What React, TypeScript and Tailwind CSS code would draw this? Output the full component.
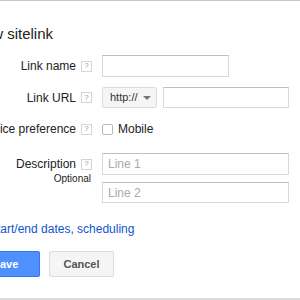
import React from "react";

function Help() {
  return (
    <div className="ml-[5px] flex h-[11px] w-[11px] shrink-0 items-center justify-center border border-[#d4d4d4] bg-white text-[8px] leading-none text-[#999]">
      ?
    </div>
  );
}

export default function App() {
  return (
    <div
      className="relative box-border h-[300px] w-[300px] overflow-hidden border-t border-b-2 border-t-[#c8c8c8] border-b-[#dcdcdc] bg-white text-[#222]"
      style={{ fontFamily: '"Liberation Sans", Arial, sans-serif' }}
    >
      <div className="ml-[-27px] mt-[24px] text-[15px] leading-[18px] text-[#222]">New sitelink</div>

      <div className="ml-[-40px] mt-[12px] flex flex-col">
        {/* Link name */}
        <div className="flex h-[22px] items-center">
          <div className="w-[116px] text-right text-[12px] leading-none">Link name</div>
          <Help />
          <div className="ml-[10px] box-border h-[22px] w-[127px] border border-[#d9d9d9] border-t-[#c0c0c0] bg-white" />
        </div>

        {/* Link URL */}
        <div className="mt-[10px] flex h-[21px] items-center">
          <div className="w-[116px] text-right text-[12px] leading-none">Link URL</div>
          <Help />
          <div className="ml-[10px] box-border flex h-[21px] w-[55px] items-center rounded-[2px] border border-[#dcdcdc] bg-[#f5f5f5] pl-[7px] text-[11px] text-[#333]">
            <span>http://</span>
            <svg className="ml-auto mr-[5px]" width="8" height="4" viewBox="0 0 8 4">
              <path d="M0 0 L8 0 L4 4 Z" fill="#777" />
            </svg>
          </div>
          <div className="ml-[6px] box-border h-[21px] w-[126px] border border-[#d9d9d9] border-t-[#c0c0c0] bg-white" />
        </div>

        {/* Device preference */}
        <div className="mt-[11px] flex h-[20px] items-center">
          <div className="w-[116px] whitespace-nowrap text-right text-[12px] leading-none">Device preference</div>
          <Help />
          <div className="ml-[10px] box-border h-[11px] w-[11px] rounded-[2px] border border-[#b8b8b8] bg-white" />
          <div className="ml-[5px] text-[12px] leading-none">Mobile</div>
        </div>

        {/* Description */}
        <div className="mt-[14px] flex">
          <div className="flex w-[132px] flex-col items-end">
            <div className="flex h-[22px] items-center">
              <div className="text-right text-[12px] leading-none">Description</div>
              <Help />
            </div>
            <div className="mr-[1px] mt-[-2px] text-[10px] leading-[12px]">Optional</div>
          </div>
          <div className="ml-[10px] flex flex-col">
            <div className="box-border flex h-[22px] w-[187px] items-center border border-[#d9d9d9] border-t-[#c0c0c0] bg-white pl-[5px] text-[12px] text-[#aaa]">
              Line 1
            </div>
            <div className="mt-[7px] box-border flex h-[21px] w-[187px] items-center border border-[#d9d9d9] border-t-[#c0c0c0] bg-white pl-[5px] text-[12px] text-[#aaa]">
              Line 2
            </div>
          </div>
        </div>
      </div>

      <div className="ml-[-11px] mt-[19px] text-[12px] leading-[14px] text-[#15c]">Start/end dates, scheduling</div>

      <div className="ml-[-29px] mt-[15px] flex">
        <div className="box-border flex h-[26px] w-[69px] items-center justify-center rounded-[2px] border border-[#3079ed] bg-[#4d90fe] text-[11px] font-bold text-white">
          Save
        </div>
        <div className="ml-[9px] box-border flex h-[26px] w-[65px] items-center justify-center rounded-[2px] border border-[#dcdcdc] bg-[#f5f5f5] text-[11px] font-bold text-[#555]">
          Cancel
        </div>
      </div>
    </div>
  );
}
